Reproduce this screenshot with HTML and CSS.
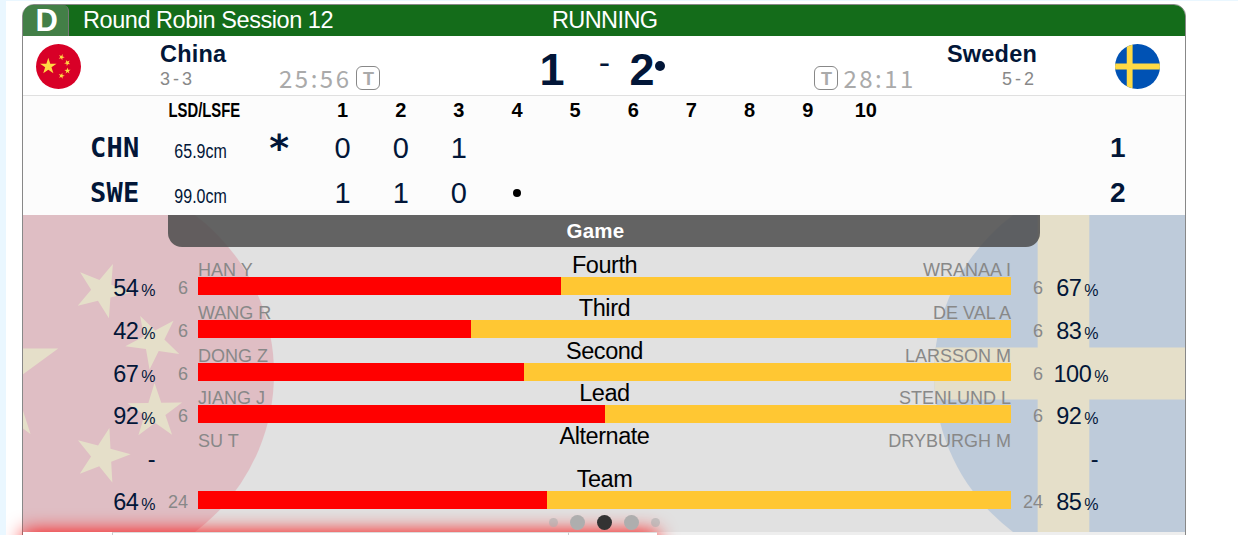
FILE: index.html
```html
<!DOCTYPE html>
<html lang="en">
<head>
    <meta charset="UTF-8">
    <meta name="viewport" content="width=device-width, initial-scale=1.0">
    <title>Round Robin Session 12</title>
    <link rel="stylesheet" href="styles.css">
</head>
<body>
    <svg class="defs" width="0" height="0">
        <symbol id="flag-chn" viewBox="0 0 512 512">
            <circle cx="256" cy="256" r="256" fill="#d80027"/>
            <path fill="#ffda44" d="m140.1 155.8 22.1 68h71.5l-57.8 42.1 22.1 68-57.9-42-57.9 42 22.2-68-57.9-42.1H118zm163.4 240.7-16.9-20.8-25 9.7 14.5-22.5-16.9-20.9 25.9 6.9 14.6-22.5 1.4 26.8 26 6.9-25.1 9.6zm33.6-61 8-25.6-21.9-15.5 26.8-.4 7.9-25.6 8.7 25.4 26.8-.3-21.5 16 8.6 25.4-21.9-15.5zm45.3-147.6L370.6 212l19.2 18.7-26.5-3.8-11.8 24-4.6-26.4-26.6-3.8 23.8-12.5-4.6-26.5 19.2 18.7zm-78.2-73-2 26.7 24.9 10.1-26.1 6.4-1.9 26.8-14.1-22.8-26.1 6.4 17.3-20.5-14.2-22.7 24.9 10.1z"/>
        </symbol>
        <clipPath id="round"><circle cx="256" cy="256" r="256"/></clipPath>
        <symbol id="flag-swe" viewBox="0 0 512 512">
            <g clip-path="url(#round)">
                <path fill="#0052b4" d="M0 0h512v512H0z"/>
                <path fill="#ffda44" d="M133.7 0v222.6H0v66.8h133.7V512h66.6V289.4H512v-66.8H200.3V0z"/>
            </g>
        </symbol>
    </svg>

    <div class="page">
        <div class="card">
            <header class="game-header">
                <span class="sheet">D</span>
                <span class="session">Round Robin Session 12</span>
                <span class="status">RUNNING</span>
            </header>

            <section class="teams">
                <svg class="flag"><use href="#flag-chn"/></svg>
                <div class="team home">
                    <div class="team-name">China</div>
                    <div class="record">3-3</div>
                </div>
                <div class="clock home-clock"><span class="time">25:56</span><span class="timeout">T</span></div>
                <div class="score">
                    <span class="points">1</span>
                    <span class="dash">-</span>
                    <span class="points">2</span>
                    <i class="hammer"></i>
                </div>
                <div class="clock away-clock"><span class="timeout">T</span><span class="time">28:11</span></div>
                <div class="team away">
                    <div class="team-name">Sweden</div>
                    <div class="record">5-2</div>
                </div>
                <svg class="flag"><use href="#flag-swe"/></svg>
            </section>

            <section class="linescore">
                <div class="line head">
                    <span></span><span><b class="narrow-head">LSD/LSFE</b></span><span></span>
                    <span>1</span><span>2</span><span>3</span><span>4</span><span>5</span>
                    <span>6</span><span>7</span><span>8</span><span>9</span><span>10</span>
                </div>
                <div class="line">
                    <span class="code">CHN</span><span class="lsd"><b>65.9cm</b></span><span class="star">*</span>
                    <span>0</span><span>0</span><span>1</span><span></span><span></span>
                    <span></span><span></span><span></span><span></span><span></span>
                    <span class="total">1</span>
                </div>
                <div class="line">
                    <span class="code">SWE</span><span class="lsd"><b>99.0cm</b></span><span class="star"></span>
                    <span>1</span><span>1</span><span>0</span><span><i class="dot"></i></span><span></span>
                    <span></span><span></span><span></span><span></span><span></span>
                    <span class="total">2</span>
                </div>
            </section>

            <section class="stats">
                <svg class="bg-flag bg-home"><use href="#flag-chn"/></svg>
                <svg class="bg-flag bg-away"><use href="#flag-swe"/></svg>
                <h2>Game</h2>

                <div class="stat">
                    <div class="pct">54<small>%</small></div><div class="count">6</div>
                    <div class="compare">
                        <div class="names"><span>HAN Y</span><strong>Fourth</strong><span>WRANAA I</span></div>
                        <div class="bar"><div style="width: 44.63%"></div></div>
                    </div>
                    <div class="count">6</div><div class="pct">67<small>%</small></div>
                </div>
                <div class="stat">
                    <div class="pct">42<small>%</small></div><div class="count">6</div>
                    <div class="compare">
                        <div class="names"><span>WANG R</span><strong>Third</strong><span>DE VAL A</span></div>
                        <div class="bar"><div style="width: 33.6%"></div></div>
                    </div>
                    <div class="count">6</div><div class="pct">83<small>%</small></div>
                </div>
                <div class="stat">
                    <div class="pct">67<small>%</small></div><div class="count">6</div>
                    <div class="compare">
                        <div class="names"><span>DONG Z</span><strong>Second</strong><span>LARSSON M</span></div>
                        <div class="bar"><div style="width: 40.12%"></div></div>
                    </div>
                    <div class="count">6</div><div class="pct full">100<small>%</small></div>
                </div>
                <div class="stat">
                    <div class="pct">92<small>%</small></div><div class="count">6</div>
                    <div class="compare">
                        <div class="names"><span>JIANG J</span><strong>Lead</strong><span>STENLUND L</span></div>
                        <div class="bar"><div style="width: 50%"></div></div>
                    </div>
                    <div class="count">6</div><div class="pct">92<small>%</small></div>
                </div>
                <div class="stat">
                    <div class="pct">-</div><div class="count"></div>
                    <div class="compare">
                        <div class="names"><span>SU T</span><strong>Alternate</strong><span>DRYBURGH M</span></div>
                    </div>
                    <div class="count"></div><div class="pct">-</div>
                </div>
                <div class="stat">
                    <div class="pct">64<small>%</small></div><div class="count">24</div>
                    <div class="compare">
                        <div class="names"><span></span><strong>Team</strong><span></span></div>
                        <div class="bar"><div style="width: 42.95%"></div></div>
                    </div>
                    <div class="count">24</div><div class="pct">85<small>%</small></div>
                </div>

                <div class="pager">
                    <i class="small"></i><i></i><i class="active"></i><i></i><i class="small"></i>
                </div>
            </section>

            <section class="panel">
                <div class="panel-box"><div></div><div></div><div></div></div>
            </section>
        </div>
    </div>
</body>
</html>
```
FILE: styles.css
```css
* {
    box-sizing: border-box;
}
body {
    margin: 0;
    padding: 1px 0 0 6px;
    height: 535px;
    overflow: hidden;
    background-color: #eaf7ff;
    font-family: "Liberation Sans", Arial, sans-serif;
    color: #021638;
}
.defs {
    position: absolute;
}
.page {
    height: 534px;
    padding: 3px 0 0 16px;
    background-color: #fff;
    overflow: hidden;
}
.card {
    width: 1164px;
    height: 545px;
    border: 1px solid #888;
    border-radius: 12px;
    background-color: #eee;
}

/* green title bar */
.game-header {
    display: flex;
    height: 31px;
    border-radius: 11px 11px 0 0;
    background-color: #146c1a;
    color: #fff;
    font-size: 23.5px;
    letter-spacing: -0.45px;
    line-height: 30px;
}
.sheet {
    width: 46px;
    padding-left: 2px;
    border-right: 1px solid #777;
    border-radius: 11px 6px 0 0;
    background-color: #437f47;
    font-size: 31px;
    font-weight: bold;
    line-height: 32px;
    text-align: center;
}
.session {
    width: 468px;
    padding-left: 14px;
}
.status {
    padding-left: 15px;
    letter-spacing: -0.6px;
}

/* teams and score */
.teams {
    display: flex;
    height: 60px;
    padding: 8px 25px 0 13px;
    border-bottom: 1px solid #e0e0e0;
    background-color: #fff;
}
.flag {
    flex: none;
    width: 45px;
    height: 45px;
}
.team {
    width: 118px;
}
.home {
    padding-left: 79px;
}
.away {
    margin-left: auto;
    margin-right: 78px;
    text-align: right;
}
.team-name {
    font-size: 23.5px;
    font-weight: bold;
    letter-spacing: 0.2px;
    line-height: 20px;
}
.record {
    color: #888;
    font-size: 18px;
    letter-spacing: 3px;
    line-height: 30px;
}
.clock {
    display: flex;
    gap: 5px;
    padding-top: 22px;
    color: #aaa;
}
.home-clock {
    margin-left: 80px;
}
.away-clock {
    margin-left: 149px;
}
.time {
    font-family: "Noto Sans CJK SC", sans-serif;
    font-size: 24px;
    letter-spacing: 2.5px;
    line-height: 24px;
}
.timeout {
    width: 24px;
    height: 24px;
    border: 1px solid #888;
    border-radius: 6px;
    font-size: 18px;
    font-weight: bold;
    line-height: 24px;
    text-align: center;
}
.score {
    display: flex;
    margin-left: 159px;
    line-height: 51px;
}
.points {
    width: 26px;
    font-size: 45px;
    font-weight: bold;
}
.dash {
    width: 64px;
    padding-left: 14px;
    text-align: center;
    font-size: 34px;
    line-height: 36px;
}
.hammer {
    width: 10px;
    height: 10px;
    margin: 17px 0 0;
    border-radius: 50%;
    background-color: #021638;
}

/* end by end scores */
.linescore {
    height: 119px;
    background-color: #fcfcfc;
}
.line {
    display: grid;
    grid-template-columns: 132px 90px 68.5px repeat(10, 58.15px) 1fr;
    height: 45px;
    font-size: 29px;
    line-height: 46px;
    text-align: center;
}
.head {
    height: 29px;
    color: #000;
    font-size: 20px;
    font-weight: bold;
    line-height: 29px;
}
.narrow-head {
    display: inline-block;
    transform: translateX(4px) scaleX(0.74);
    margin: 0 -20px;
}
.code {
    padding-left: 67px;
    font-family: "DejaVu Sans Mono", monospace;
    font-size: 27px;
    font-weight: bold;
    letter-spacing: 0.2px;
    text-align: left;
}
.lsd {
    font-size: 20px;
    line-height: 52px;
}
.lsd b {
    display: inline-block;
    padding-left: 2px;
    font-weight: normal;
    transform: scaleX(0.8);
}
.star {
    font-family: "DejaVu Sans Mono", monospace;
    font-size: 38px;
    font-weight: bold;
    line-height: 46px;
}
.total {
    padding-left: 215px;
    font-size: 28px;
    font-weight: bold;
    text-align: left;
}
.dot {
    display: inline-block;
    width: 8px;
    height: 8px;
    border-radius: 50%;
    background-color: #000;
    vertical-align: 6px;
}

/* percentages per position */
.stats {
    position: relative;
    height: 317px;
    overflow: hidden;
    background-color: #e1e1e1;
}
.bg-flag {
    position: absolute;
    top: -40px;
    width: 397px;
    height: 397px;
    opacity: 0.15;
}
.bg-home {
    left: -146px;
}
.bg-away {
    left: 911px;
}
.stats h2 {
    position: relative;
    width: 872px;
    height: 32px;
    margin: 0 0 5px 145px;
    padding-right: 17px;
    border-radius: 0 0 14px 14px;
    background-color: rgba(76, 76, 76, 0.85);
    color: #fff;
    font-size: 20.5px;
    letter-spacing: 0.2px;
    line-height: 32px;
    text-align: center;
}
.stat {
    position: relative;
    display: grid;
    grid-template-columns: 132px 33px 813px 33px 54px;
    height: 42.8px;
}
.compare {
    margin: 0 0 0 10px;
    width: 813px;
}
.stat .count {
    padding-top: 24px;
    color: #888;
    font-size: 18px;
    line-height: 25px;
    text-align: right;
}
.compare + .count {
    padding-left: 10px;
    margin-right: -9px;
}
.pct {
    padding-top: 25px;
    font-size: 23.5px;
    letter-spacing: -0.5px;
    line-height: 23px;
    text-align: right;
    white-space: nowrap;
}
.count + .pct {
    margin-right: -10px;
}
.count + .full {
    margin-right: -20px;
}
.pct small {
    margin-left: 3px;
    font-size: 16px;
}
.names {
    display: grid;
    grid-template-columns: 1fr auto 1fr;
    height: 25px;
    line-height: 26px;
}
.names span {
    padding-top: 5px;
    color: #888;
    font-size: 18px;
}
.names span:last-child {
    text-align: right;
}
.names strong {
    color: #000;
    font-size: 23.5px;
    font-weight: normal;
    letter-spacing: -0.45px;
}
.bar {
    height: 18px;
    background-color: #ffc733;
}
.bar div {
    height: 100%;
    background-color: #f00;
}
/* keeps the dots above the red glow */
.pager {
    position: relative;
    z-index: 2;
    display: flex;
    align-items: center;
    justify-content: center;
    gap: 12px;
    height: 15px;
    margin-top: 6px;
}
.pager i {
    width: 15px;
    height: 15px;
    border-radius: 50%;
    background-color: #aeaeae;
}
.pager .active {
    background-color: #333;
}
.pager .small {
    width: 9px;
    height: 9px;
    background-color: rgba(174, 174, 174, 0.6);
}

/* highlighted box below */
.panel-box {
    display: grid;
    grid-template-columns: 89px 456px 1fr;
    position: relative;
    width: 634px;
    height: 50px;
    background-color: #fff;
    box-shadow: 0 0 20px #f00;
}
.panel-box div + div {
    border-top: 1px solid #ddd;
    border-left: 1px solid #ccc;
}
```
